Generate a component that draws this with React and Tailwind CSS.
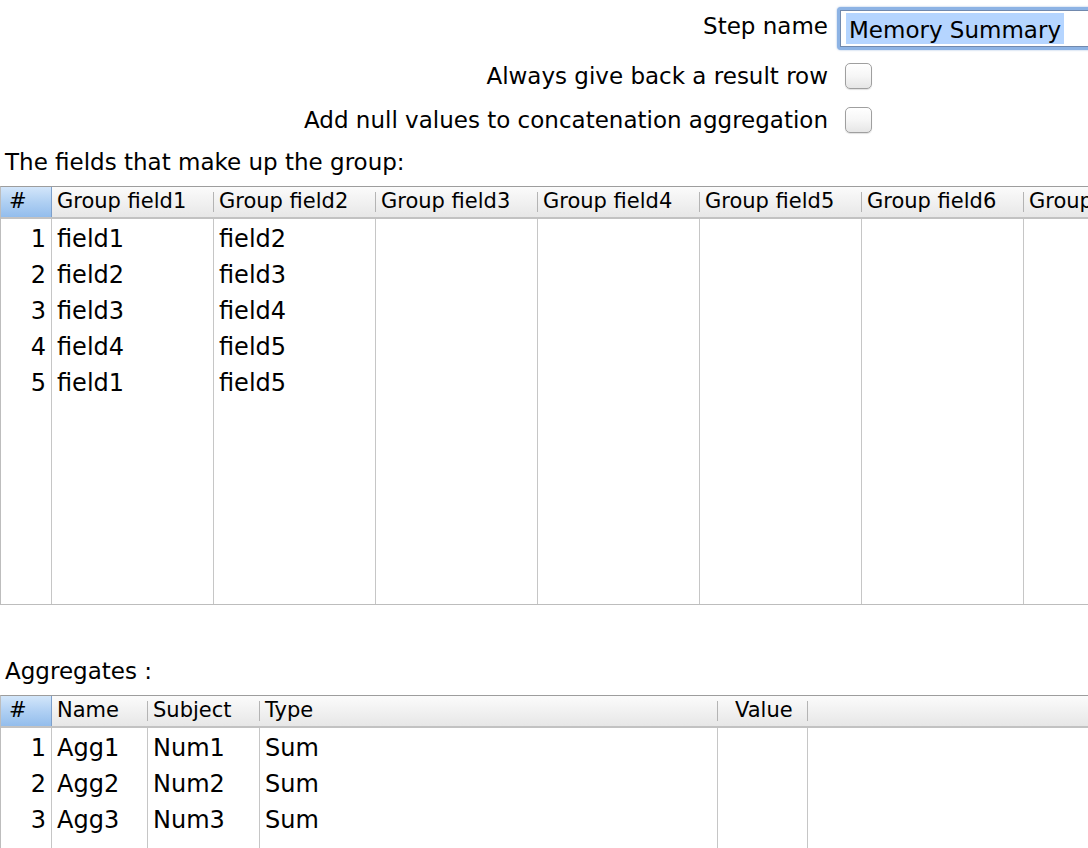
import React from "react";

const groupCols = [
  "Group field1",
  "Group field2",
  "Group field3",
  "Group field4",
  "Group field5",
  "Group field6",
];

const groupRows = [
  ["field1", "field2"],
  ["field2", "field3"],
  ["field3", "field4"],
  ["field4", "field5"],
  ["field1", "field5"],
];

const aggCols = [
  { label: "Name", w: "w-[96px]" },
  { label: "Subject", w: "w-[112px]" },
  { label: "Type", w: "w-[458px]" },
  { label: "Value", w: "w-[90px]", pad: "pl-[17px]" },
];

const aggRows = [
  ["Agg1", "Num1", "Sum", ""],
  ["Agg2", "Num2", "Sum", ""],
  ["Agg3", "Num3", "Sum", ""],
];

function Checkbox() {
  return (
    <div className="ml-[8px] h-[26px] w-[27px] rounded-[5px] border border-[#9f9f9f] bg-linear-to-b from-white via-[#f6f6f6] to-[#e6e6e6] shadow-[0_1px_1px_rgba(0,0,0,0.12)]" />
  );
}

function HeaderCell({ children, className = "", pad = "pl-[5px]" }) {
  return (
    <div className={`flex h-full shrink-0 items-center ${className}`}>
      <span className={`flex-1 overflow-hidden whitespace-nowrap ${pad}`}>{children}</span>
      <div className="h-[20px] w-px shrink-0 bg-[#b4b4b4]" />
    </div>
  );
}

function HashHeader() {
  return (
    <div className="flex h-full w-[51px] shrink-0 items-center border-r border-[#7d9fca] bg-linear-to-b from-[#d3e6fa] via-[#b0d0f3] to-[#93bdec] pl-[8px]">
      #
    </div>
  );
}

function Table({ height, headers, bodyCols }) {
  return (
    <div
      className={`flex flex-col border-t border-b border-l border-t-[#9d9d9d] border-b-[#bdbdbd] border-l-[#bdbdbd] ${height}`}
    >
      {/* header */}
      <div className="flex h-[32px] shrink-0 border-b-2 border-[#c2c2c2] bg-linear-to-b from-[#fbfbfb] via-[#f1f1f1] to-[#e7e7e7] text-[21px]">
        <HashHeader />
        {headers}
      </div>
      {/* body */}
      <div className="flex min-h-0 flex-1 text-[24px]">{bodyCols}</div>
    </div>
  );
}

function BodyCol({ className = "", children, last }) {
  return (
    <div
      className={`flex shrink-0 flex-col pt-[2px] ${last ? "flex-1" : "border-r border-[#c6c6c6]"} ${className}`}
    >
      {children}
    </div>
  );
}

function Cell({ children, align = "left" }) {
  return (
    <div
      className={`h-[36px] whitespace-nowrap leading-[36px] ${
        align === "right" ? "pr-[5px] text-right" : "pl-[5px]"
      }`}
    >
      {children}
    </div>
  );
}

export default function App() {
  return (
    <div className="h-[848px] w-[1088px] overflow-hidden bg-white font-['DejaVu_Sans',sans-serif] text-black">
      {/* top form */}
      <div className="pt-[7px] text-[23px]">
        <div className="flex h-[43px] items-center">
          <div className="w-[828px] shrink-0 pb-[4px] text-right">Step name</div>
          <div className="ml-[9px] h-full w-[400px] shrink-0 rounded-l-[4px] bg-[#8db3e4] py-[3px] pl-[3px] shadow-[0_0_2px_rgba(80,130,200,0.6)]">
            <div className="flex h-full items-center border border-r-0 border-[#7189ad] bg-white pl-[5px]">
              <span className="h-[31px] bg-[#b5d5ff] px-[3px] pt-[2px] leading-[31px]">Memory Summary</span>
            </div>
          </div>
        </div>
        <div className="mt-[13px] flex h-[26px] items-center">
          <div className="w-[828px] shrink-0 text-right">Always give back a result row</div>
          <div className="ml-[9px]">
            <Checkbox />
          </div>
        </div>
        <div className="mt-[18px] flex h-[26px] items-center">
          <div className="w-[828px] shrink-0 text-right">
            Add null values to concatenation aggregation
          </div>
          <div className="ml-[9px]">
            <Checkbox />
          </div>
        </div>
        <div className="mt-[14px] h-[30px] pl-[5px] leading-[30px]">
          The fields that make up the group:
        </div>
      </div>

      <div className="mt-[9px]">
        <Table
          height="h-[419px]"
          headers={
            <>
              {groupCols.map((c) => (
                <HeaderCell key={c} className="w-[162px]">
                  {c}
                </HeaderCell>
              ))}
              <HeaderCell className="flex-1">Group field7</HeaderCell>
            </>
          }
          bodyCols={
            <>
              <BodyCol className="w-[51px]">
                {groupRows.map((_, i) => (
                  <Cell key={i} align="right">
                    {i + 1}
                  </Cell>
                ))}
              </BodyCol>
              {groupCols.map((c, ci) => (
                <BodyCol key={c} className="w-[162px]">
                  {groupRows.map((r, i) => (
                    <Cell key={i}>{r[ci] || ""}</Cell>
                  ))}
                </BodyCol>
              ))}
              <BodyCol last />
            </>
          }
        />
      </div>

      <div className="h-[90px] pl-[5px] pt-[51px] text-[23px] leading-[30px]">Aggregates :</div>

      <Table
        height="h-[300px]"
        headers={
          <>
            {aggCols.map((c) => (
              <HeaderCell key={c.label} className={c.w} pad={c.pad || "pl-[5px]"}>
                {c.label}
              </HeaderCell>
            ))}
            <div className="flex-1" />
          </>
        }
        bodyCols={
          <>
            <BodyCol className="w-[51px]">
              {aggRows.map((_, i) => (
                <Cell key={i} align="right">
                  {i + 1}
                </Cell>
              ))}
            </BodyCol>
            {aggCols.map((c, ci) => (
              <BodyCol key={c.label} className={c.w}>
                {aggRows.map((r, i) => (
                  <Cell key={i}>{r[ci]}</Cell>
                ))}
              </BodyCol>
            ))}
            <BodyCol last />
          </>
        }
      />
    </div>
  );
}
